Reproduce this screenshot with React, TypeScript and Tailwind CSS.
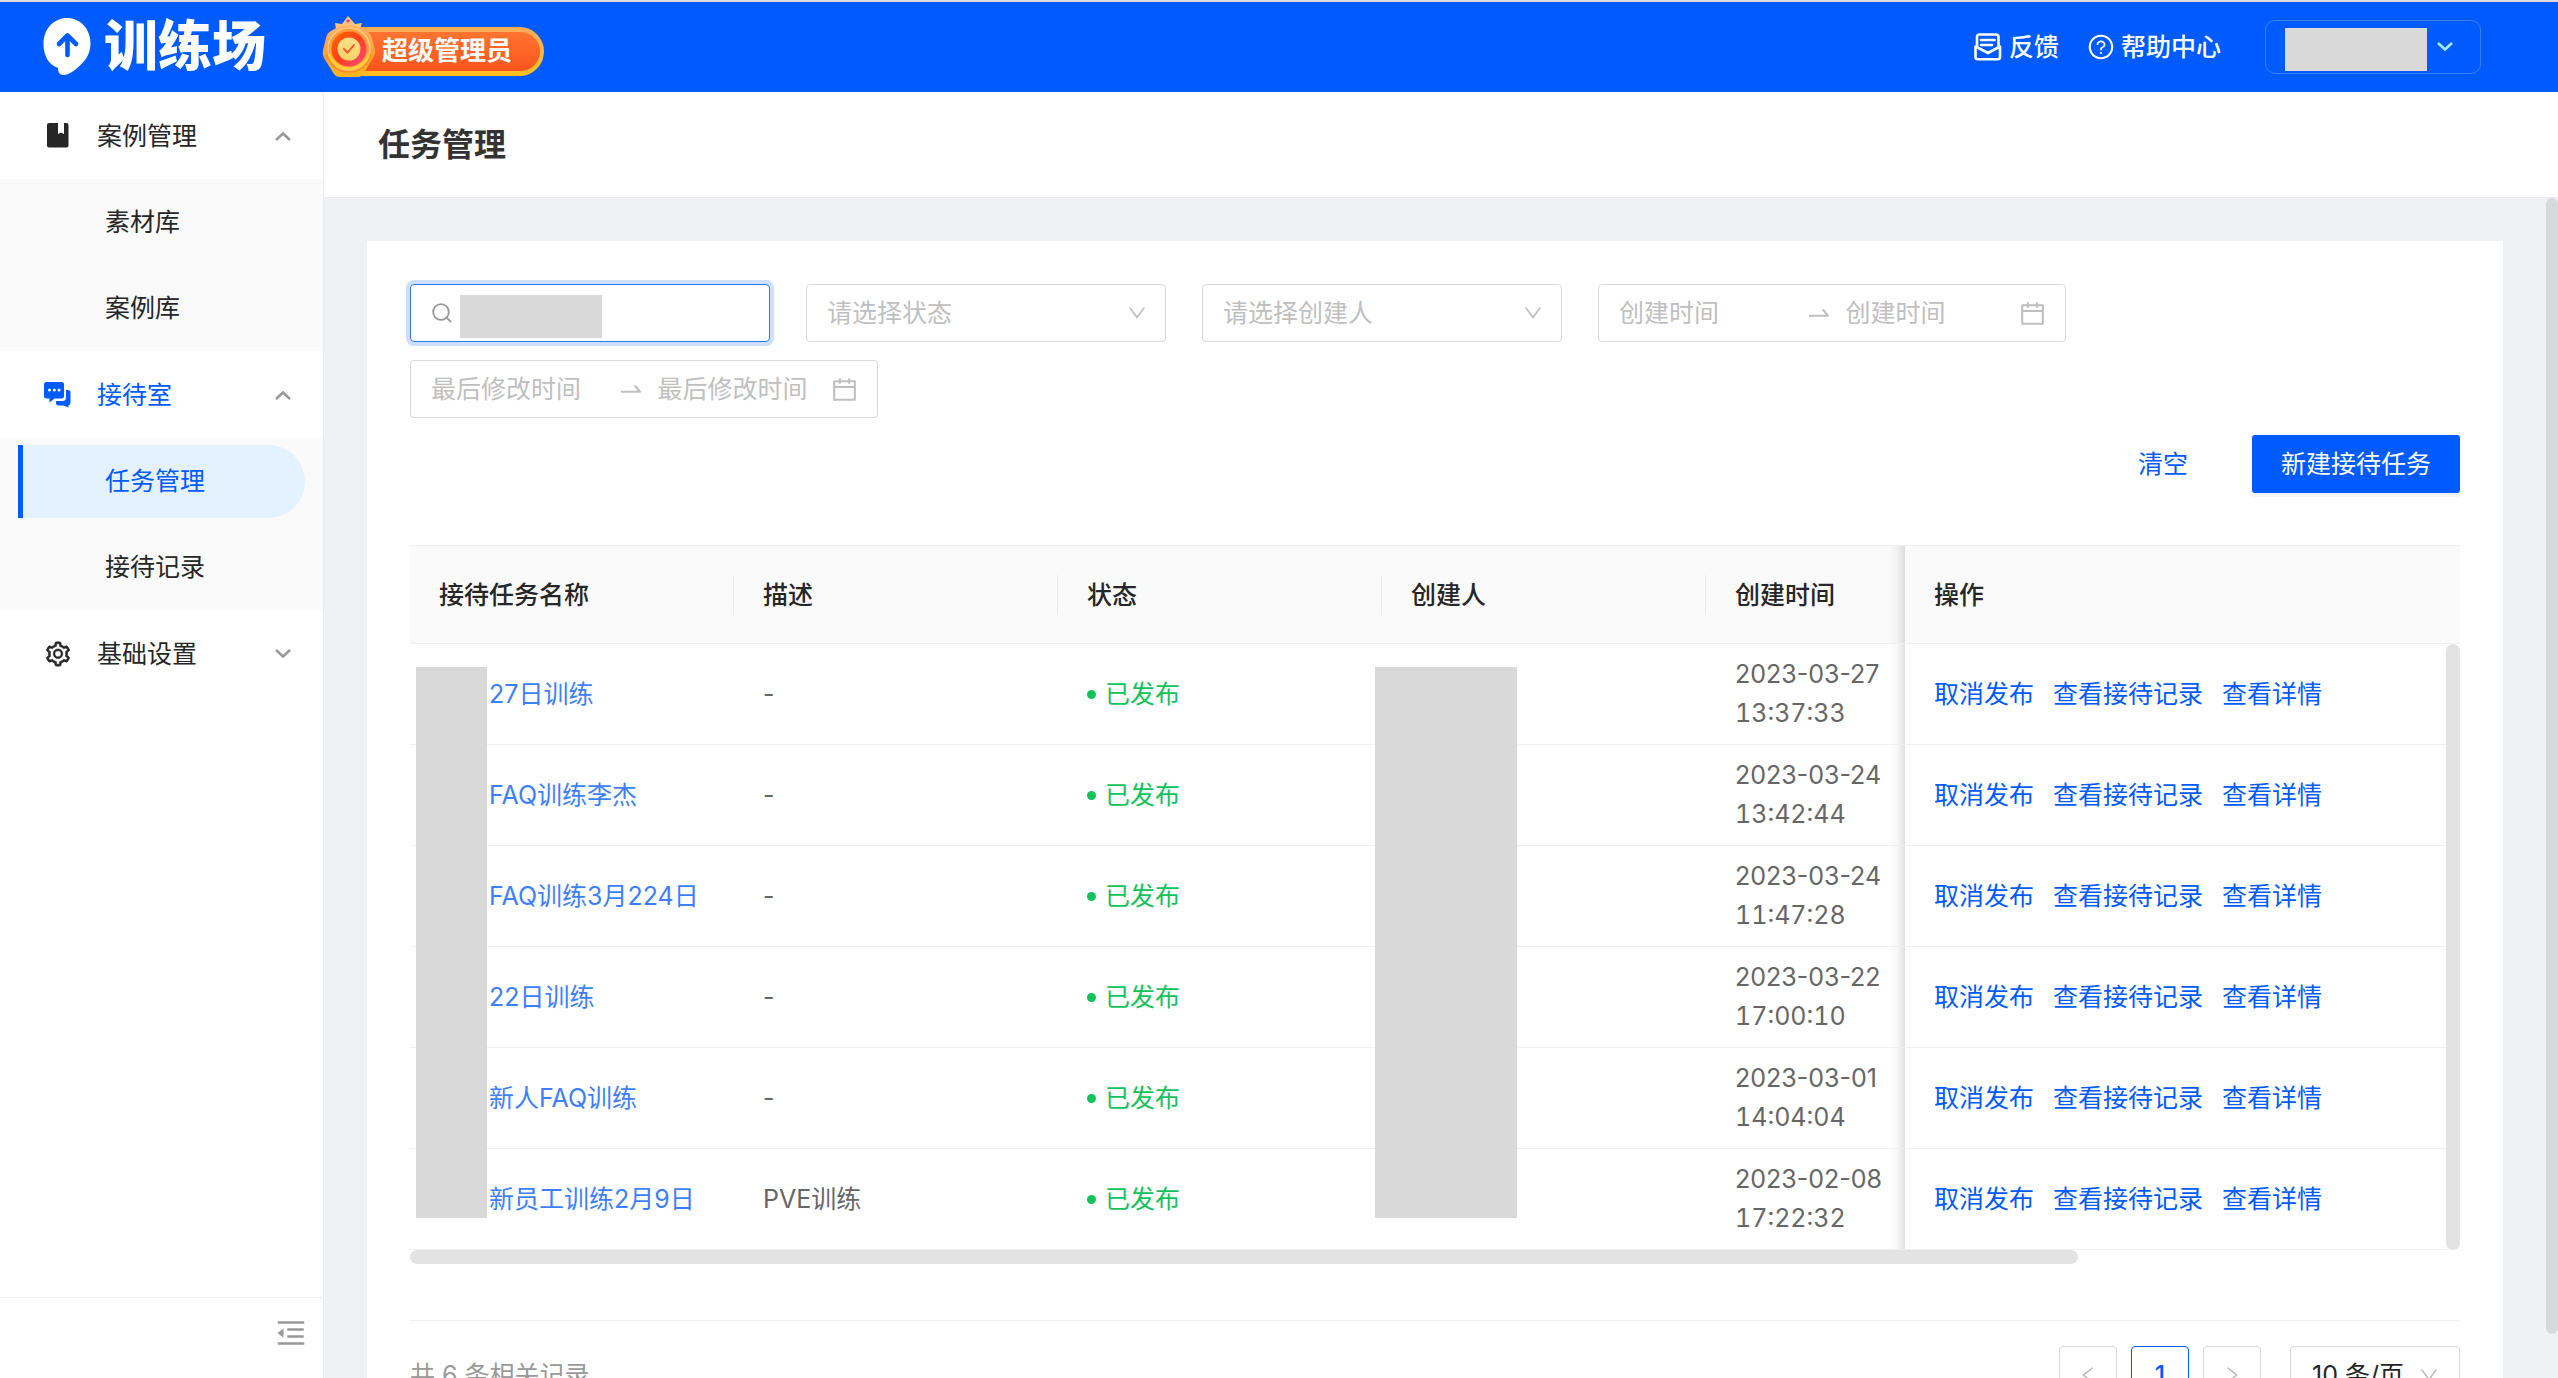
import { useState } from 'react';
import {
  AiOutlineCalendar,
  AiOutlineDown,
  AiOutlineLeft,
  AiOutlineMenuFold,
  AiOutlineQuestionCircle,
  AiOutlineRight,
  AiOutlineSetting,
  AiOutlineSwapRight,
} from 'react-icons/ai';

interface Task {
  name: string;
  desc: string;
  date: string;
  time: string;
}

const tasks: Task[] = [
  { name: '27日训练', desc: '-', date: '2023-03-27', time: '13:37:33' },
  { name: 'FAQ训练李杰', desc: '-', date: '2023-03-24', time: '13:42:44' },
  { name: 'FAQ训练3月224日', desc: '-', date: '2023-03-24', time: '11:47:28' },
  { name: '22日训练', desc: '-', date: '2023-03-22', time: '17:00:10' },
  { name: '新人FAQ训练', desc: '-', date: '2023-03-01', time: '14:04:04' },
  { name: '新员工训练2月9日', desc: 'PVE训练', date: '2023-02-08', time: '17:22:32' },
];

const columns = ['接待任务名称', '描述', '状态', '创建人', '创建时间'];
const actions = ['取消发布', '查看接待记录', '查看详情'];

function LogoMark() {
  return (
    <svg width="48" height="58" viewBox="0 0 48 58" aria-hidden="true">
      <path
        d="M24 0C37 0 47.500 10.500 47.500 25.500C47.500 35 43 42 37 47.500C32 52 26 57 20.500 57C17 57 15 54.500 15 50C6 47 .500 38 .500 26C.500 10.500 11 0 24 0Z"
        fill="#fff"
      />
      <path
        d="M24.500 37V18M16 26L24.500 17.500L33 26"
        fill="none"
        stroke="#005bff"
        strokeWidth="4.600"
        strokeLinecap="round"
        strokeLinejoin="round"
      />
    </svg>
  );
}

function Medal() {
  return (
    <svg width="54" height="62" viewBox="0 0 54 62" aria-hidden="true">
      <defs>
        <linearGradient id="rim" x1="0" y1="0" x2="0" y2="1">
          <stop offset="0" stopColor="#ffb566" />
          <stop offset=".6" stopColor="#ff9d33" />
          <stop offset="1" stopColor="#ffb81f" />
        </linearGradient>
        <linearGradient id="core" x1="0" y1="0" x2="1" y2="1">
          <stop offset="0" stopColor="#ff6a00" />
          <stop offset=".5" stopColor="#ff3f1a" />
          <stop offset="1" stopColor="#ff4d8d" />
        </linearGradient>
        <linearGradient id="coin" x1="0" y1="0" x2="0" y2="1">
          <stop offset="0" stopColor="#ffdf8a" />
          <stop offset="1" stopColor="#ffd066" />
        </linearGradient>
      </defs>
      <path d="M14 13L13 7L20 8L26 0L33 8L40 7L38 13Z" fill="#ffc27d" />
      <circle cx="26" cy="5" r="1.600" fill="#d63ca0" />
      <path d="M14 12Q26 6 38 12L46 16Q49 18 50 23L53 34Q54 37 52 40L42 57Q40 61 36 61H17Q14 61 12 58L2 42Q0 38 1 34L4 22Q5 17 9 15Z" fill="url(#rim)" />
      <path d="M5 38Q10 56 27 56Q43 56 49 38" fill="none" stroke="#ff8a1f" strokeWidth="1.500" />
      <circle cx="27" cy="33" r="21" fill="#ff9d3d" />
      <circle cx="27" cy="33" r="21" fill="none" stroke="#ffc97f" strokeWidth="1.500" />
      <path d="M7 38A21 21 0 0 0 47 38" fill="none" stroke="#ffcf2e" strokeWidth="2.500" />
      <circle cx="27" cy="33" r="17.500" fill="url(#core)" />
      <circle cx="27" cy="33" r="11.500" fill="url(#coin)" />
      <path d="M22 33L25.500 36.500L32 29" fill="none" stroke="#f2582a" strokeWidth="1.900" strokeLinecap="round" />
    </svg>
  );
}

function FeedbackIcon() {
  return (
    <svg width="28" height="28" viewBox="0 0 28 28" fill="none" stroke="currentColor" strokeWidth="2.600" strokeLinejoin="round" aria-hidden="true">
      <path d="M3 15V4Q3 1.500 5.500 1.500H22Q24.500 1.500 24.500 4V15" />
      <path d="M1.500 13.500V24Q1.500 26.300 4 26.300H23.500Q26 26.300 26 24V13.500L14 20Z" />
      <path d="M7 7H20.500M7 12H18" strokeLinecap="round" />
    </svg>
  );
}

function SearchIcon() {
  return (
    <svg width="20" height="20" viewBox="0 0 20 20" fill="none" stroke="#999" strokeWidth="1.800" aria-hidden="true">
      <circle cx="9" cy="9" r="7.800" />
      <path d="M14.500 14.500L19 19" />
    </svg>
  );
}

function BookIcon() {
  return (
    <svg width="22" height="25" viewBox="0 0 22 25" aria-hidden="true">
      <path d="M2 0H11V11L14 9.500L17 11V0H19.500Q21.500 0 21.500 2V22.500Q21.500 24.500 19.500 24.500H2Q0 24.500 0 22.500V2Q0 0 2 0Z" fill="#262626" />
    </svg>
  );
}

function ChatIcon() {
  return (
    <svg width="27" height="26" viewBox="0 0 27 26" aria-hidden="true">
      <path d="M2.500 0H17.500Q20 0 20 2.500V14Q20 16.500 17.500 16.500H10.500L5.500 20.500V16.500H2.500Q0 16.500 0 14V2.500Q0 0 2.500 0Z" fill="#005bff" />
      <path d="M22 8H24Q26.500 8 26.500 10.500V20.500Q26.500 23 24.500 23.200V25.500L19.500 23.500H14Q12.500 23.500 12 21.500V19H18.500Q22 19 22 15.500Z" fill="#005bff" />
      <g fill="#fff">
        <circle cx="5.500" cy="8" r="1.500" />
        <circle cx="10.300" cy="8" r="1.500" />
        <circle cx="15" cy="8" r="1.500" />
      </g>
    </svg>
  );
}

function Caret({ up = false, className = '' }: { up?: boolean; className?: string }) {
  return (
    <svg width="16" height="10" viewBox="0 0 16 10" fill="none" stroke="currentColor" strokeWidth="2.600" className={className} aria-hidden="true">
      <path d={up ? 'M1 9L8 2.500L15 9' : 'M1 1L8 7.500L15 1'} />
    </svg>
  );
}

interface MenuGroupProps {
  icon: React.ReactNode;
  label: string;
  active?: boolean;
  open?: boolean;
  items?: string[];
  current?: string;
}

function MenuGroup({ icon, label, active = false, open = false, items = [], current }: MenuGroupProps) {
  const [expanded, setExpanded] = useState(open);

  return (
    <div>
      <button
        onClick={() => setExpanded(!expanded)}
        aria-expanded={expanded}
        className={`flex h-[87px] w-full items-center pl-11 pr-8 ${active ? 'text-[#005bff]' : 'text-[#262626]'}`}
      >
        <span className="flex w-[53px] items-center">{icon}</span>
        <span className="flex-1 text-left">{label}</span>
        <Caret up={expanded} className="text-[#999]" />
      </button>
      {expanded && items.length > 0 && (
        <ul className="bg-[#fafafa]">
          {items.map((item) => (
            <li key={item} className="flex h-[86px] items-center px-[18px]">
              <a
                href="#"
                className={`flex h-[73px] flex-1 items-center rounded-r-full border-l-[5px] pl-[82px] ${
                  item === current ? 'border-[#005bff] bg-[#e4f2ff] text-[#005bff]' : 'border-transparent text-[#262626]'
                }`}
              >
                {item}
              </a>
            </li>
          ))}
        </ul>
      )}
    </div>
  );
}

function SelectBox({ placeholder }: { placeholder: string }) {
  return (
    <div className="relative w-[360px]">
      <select
        aria-label={placeholder}
        className="h-[58px] w-full appearance-none rounded border border-[#d9d9d9] bg-white px-5 text-[#bfbfbf] outline-none"
      >
        <option>{placeholder}</option>
      </select>
      <AiOutlineDown size={22} className="pointer-events-none absolute right-[18px] top-[18px] text-[#bfbfbf]" />
    </div>
  );
}

function DateRange({ placeholder }: { placeholder: string }) {
  return (
    <div className="flex h-[58px] w-[468px] items-center rounded border border-[#d9d9d9] pl-5 pr-[18px] text-[#bfbfbf]">
      <input aria-label={`${placeholder} 开始`} placeholder={placeholder} className="w-0 flex-1 outline-none placeholder:text-[#bfbfbf]" />
      <AiOutlineSwapRight size={28} className="mx-[13px] shrink-0" />
      <input aria-label={`${placeholder} 结束`} placeholder={placeholder} className="w-0 flex-1 outline-none placeholder:text-[#bfbfbf]" />
      <AiOutlineCalendar size={29} className="shrink-0" />
    </div>
  );
}

function TaskTable() {
  return (
    <div>
      <div className="relative">
        <table className="w-full table-fixed border-t border-[#f0f0f0] text-left">
          <colgroup>
            <col className="w-[324px]" />
            <col className="w-[324px]" />
            <col className="w-[324px]" />
            <col className="w-[324px]" />
            <col />
            <col className="w-[555px]" />
          </colgroup>
          <thead>
            <tr className="h-[98px] border-b border-[#f0f0f0] bg-[#fafafa] text-[#262626]">
              {columns.map((column, i) => (
                <th key={column} className="relative pl-[29px] font-medium">
                  {column}
                  {i < columns.length - 1 && <span className="absolute right-0 top-[29px] h-10 w-px bg-[#ebebeb]" />}
                </th>
              ))}
              <th className="relative pl-[29px] font-medium">
                <span className="absolute -left-4 inset-y-0 w-4 bg-gradient-to-r from-transparent via-black/3 to-black/12" />
                操作
              </th>
            </tr>
          </thead>
          <tbody>
            {tasks.map((task) => (
              <tr key={`${task.date} ${task.time}`} className="h-[101px] border-b border-[#f0f0f0] text-[#666]">
                <td className="pl-[79px]">
                  <a href="#" className="text-[#3d7fff]">{task.name}</a>
                </td>
                <td className="pl-[29px]">{task.desc}</td>
                <td className="pl-[29px]">
                  <span className="flex items-center gap-[9px] text-[#12c25b]">
                    <span className="h-[9px] w-[9px] rounded-full bg-[#12c25b]" />
                    已发布
                  </span>
                </td>
                <td />
                <td className="pl-[29px] leading-[39px]">
                  <div>{task.date}</div>
                  <div className="tabular-nums">{task.time}</div>
                </td>
                <td className="relative pl-[29px]">
                  <span className="absolute -left-4 inset-y-0 w-4 bg-gradient-to-r from-transparent via-black/3 to-black/12" />
                  <div className="flex gap-[19px]">
                    {actions.map((action) => (
                      <a key={action} href="#" className="text-[#005bff]">{action}</a>
                    ))}
                  </div>
                </td>
              </tr>
            ))}
          </tbody>
        </table>
        <div className="absolute bottom-0 right-0 top-[99px] w-[14px] bg-white">
          <div className="h-full rounded-full bg-[#e3e3e3]" />
        </div>
        <div className="absolute left-[6px] top-[122px] h-[551px] w-[71px] bg-[#d9d9d9]" />
        <div className="absolute left-[965px] top-[122px] h-[551px] w-[142px] bg-[#d9d9d9]" />
      </div>
      <div className="h-[14px] w-[1668px] rounded-full bg-[#e3e3e3]" />
    </div>
  );
}

function Pagination() {
  const pageButton = 'flex h-[58px] w-[58px] items-center justify-center rounded border';
  return (
    <div className="mt-[56px] flex items-start justify-between border-t border-[#f0f0f0] pt-[25px]">
      <p className="leading-[58px] text-[#999]">共 6 条相关记录</p>
      <div className="flex gap-[14px] text-[#262626]">
        <button aria-label="上一页" className={`${pageButton} border-[#d9d9d9] text-[#bfbfbf]`}>
          <AiOutlineLeft size={22} />
        </button>
        <button className={`${pageButton} border-[#005bff] font-medium text-[#005bff]`}>1</button>
        <button aria-label="下一页" className={`${pageButton} border-[#d9d9d9] text-[#bfbfbf]`}>
          <AiOutlineRight size={22} />
        </button>
        <div className="relative ml-[15px] w-[170px]">
          <select aria-label="每页条数" className="h-[58px] w-full appearance-none rounded border border-[#d9d9d9] bg-white px-[21px] outline-none">
            <option>10 条/页</option>
          </select>
          <AiOutlineDown size={22} className="pointer-events-none absolute right-5 top-[18px] text-[#bfbfbf]" />
        </div>
      </div>
    </div>
  );
}

export default function App() {
  return (
    <div className="flex h-screen flex-col overflow-hidden border-t-2 border-[#dcdcdc] bg-white font-[Inter,'Noto_Sans_CJK_SC',sans-serif] text-[25px] leading-[38px]">
      <header className="flex h-[90px] shrink-0 items-center bg-[#005bff] pl-[43px] pr-[77px] text-white">
        <LogoMark />
        <span className="ml-[13px] text-[54px] font-black leading-[60px]">训练场</span>
        <div className="relative ml-[60px] mt-2 flex h-[49px] items-center rounded-full bg-gradient-to-b from-[#ffab57] to-[#ffc01a] py-[5px] pl-9 pr-1">
          <div className="flex h-full items-center rounded-r-full bg-gradient-to-b from-[#ff7430] to-[#f9541b] pl-[20px] pr-[28px] text-[26px] font-bold">
            超级管理员
          </div>
          <div className="absolute -left-1 -top-[11px]">
            <Medal />
          </div>
        </div>
        <div className="ml-auto flex items-center font-medium">
          <a href="#" className="flex items-center gap-[7px]">
            <FeedbackIcon />
            反馈
          </a>
          <a href="#" className="ml-7 flex items-center gap-[6px]">
            <AiOutlineQuestionCircle size={28} />
            帮助中心
          </a>
          <button aria-label="账号" className="ml-11 flex h-[54px] w-[216px] items-center rounded-[10px] border border-[#3f80ff] pl-[19px]">
            <span className="mt-1 h-[43px] w-[142px] bg-[#d9d9d9]" />
            <Caret className="ml-[10px] text-[#a8ecff]" />
          </button>
        </div>
      </header>

      <div className="flex min-h-0 flex-1">
        <aside className="flex w-[324px] shrink-0 flex-col border-r border-[#ebecf0]">
          <nav className="flex-1">
            <MenuGroup icon={<span className="ml-[3px]"><BookIcon /></span>} label="案例管理" open items={['素材库', '案例库']} />
            <MenuGroup icon={<ChatIcon />} label="接待室" active open items={['任务管理', '接待记录']} current="任务管理" />
            <MenuGroup icon={<AiOutlineSetting size={28} strokeWidth={20} />} label="基础设置" />
          </nav>
          <div className="flex h-[81px] items-start justify-end border-t border-[#ebebeb] pr-[15px] pt-[18px]">
            <button aria-label="收起菜单" className="text-[#999]">
              <AiOutlineMenuFold size={34} />
            </button>
          </div>
        </aside>

        <div className="flex min-w-0 flex-1 flex-col">
          <div className="flex h-[106px] shrink-0 items-center border-b border-[#e8eaed] pl-[54px]">
            <h1 className="text-[32px] font-semibold leading-[48px] text-[#333]">任务管理</h1>
          </div>
          <main className="relative min-h-0 flex-1 overflow-hidden bg-[#f0f1f5] pl-[43px] pr-[55px] pt-[43px]">
            <section className="bg-white p-[43px]">
              <div className="flex flex-wrap gap-x-9 gap-y-[18px]">
                <label className="flex h-[58px] w-[360px] items-center rounded border border-[#2878ff] pl-[21px] shadow-[0_0_0_4px_#cfdfff]">
                  <SearchIcon />
                  <span className="ml-2 mt-1.5 h-[43px] w-[142px] bg-[#d9d9d9]" />
                  <input aria-label="接待任务名称" className="w-0 flex-1 outline-none" />
                </label>
                <SelectBox placeholder="请选择状态" />
                <SelectBox placeholder="请选择创建人" />
                <DateRange placeholder="创建时间" />
                <DateRange placeholder="最后修改时间" />
              </div>
              <div className="mb-[52px] mt-[17px] flex justify-end gap-[36px]">
                <button className="px-[28px] text-[#005bff]">清空</button>
                <button className="h-[58px] rounded-[3px] bg-[#005bff] px-[29px] text-white shadow-[0_4px_0_#f5f5f8]">新建接待任务</button>
              </div>
              <TaskTable />
              <Pagination />
            </section>
            <div className="absolute bottom-11 right-0 top-0 w-3 rounded-full bg-[#d8d9dd]" />
          </main>
        </div>
      </div>
    </div>
  );
}
